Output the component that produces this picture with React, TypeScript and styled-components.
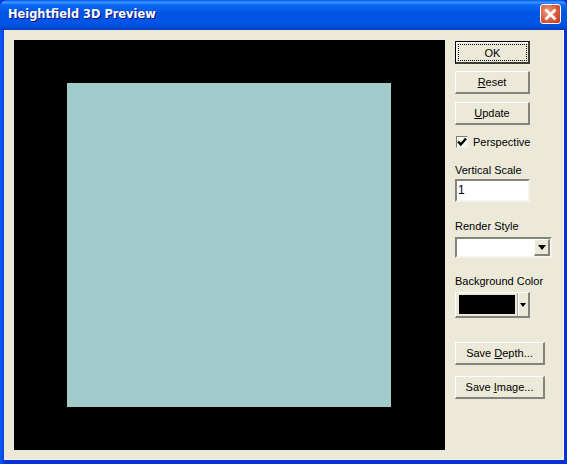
import React from "react";
import styled, { createGlobalStyle, css } from "styled-components";

const GlobalStyle = createGlobalStyle`
    html, body {
        margin: 0;
        padding: 0;
        background: #0831d9;
    }
`;

const Window = styled.div`
    width: 567px;
    height: 464px;
    display: flex;
    flex-direction: column;
    overflow: hidden;
    font-family: "Liberation Sans", Arial, sans-serif;
    font-size: 11px;
    color: #000;
    border-radius: 7px 7px 0 0;
    background: linear-gradient(to right, #0a5cf0 0, #0831d9 6px, #0831d9 100%);
`;

const TitleBar = styled.div`
    height: 30px;
    flex: none;
    display: flex;
    align-items: center;
    justify-content: space-between;
    padding: 0 6px 2px 8px;
    box-sizing: border-box;
    background: linear-gradient(
        to bottom,
        #0058ee 0%,
        #3d95ff 8%,
        #0a6af3 16%,
        #0054e3 45%,
        #0055e8 80%,
        #0048cf 92%,
        #003dc0 100%
    );
`;

const Title = styled.span`
    color: #fff;
    font-family: "DejaVu Sans", Verdana, sans-serif;
    font-weight: bold;
    font-size: 11.4px;
    text-shadow: 1px 1px 0 #0f1089;
`;

const CloseButton = styled.div`
    width: 21px;
    height: 20px;
    box-sizing: border-box;
    border: 1px solid #fff;
    border-radius: 3px;
    background: radial-gradient(circle at 35% 35%, #e8a080 0%, #d8593a 55%, #c13a18 100%);
    display: flex;
    align-items: center;
    justify-content: center;
`;

const Frame = styled.div`
    flex: 1;
    display: flex;
    margin: 0 3px 4px 4px;
    padding: 10px 15px 10px 10px;
    background: #ece9d8;
    box-shadow: inset -1px -1px 0 #f6f4ea;
    gap: 10px;
    min-height: 0;
`;

const Viewport = styled.div`
    width: 431px;
    height: 410px;
    flex: none;
    box-sizing: border-box;
    padding-right: 2px;
    background: #000;
    display: flex;
    align-items: center;
    justify-content: center;
`;

const Surface = styled.div`
    width: 324px;
    height: 324px;
    background: #a2cccc;
`;

const Sidebar = styled.div`
    flex: 1;
    display: flex;
    flex-direction: column;
    align-items: flex-start;
    padding-top: 1px;
`;

const Button = styled.div<{ $wide?: boolean; $default?: boolean; $top: number }>`
    width: ${(p) => (p.$wide ? 90 : 75)}px;
    height: 23px;
    margin-top: ${(p) => p.$top}px;
    box-sizing: border-box;
    flex: none;
    display: flex;
    align-items: center;
    justify-content: center;
    background: #ece9d8;
    border-style: solid;
    border-width: 1px 2px 2px 1px;
    border-color: #fff #85847c #85847c #fff;
    ${(p) =>
        p.$default &&
        css`
            border-width: 1px 2px 2px 1px;
            border-color: #000 #3c3b36 #3c3b36 #000;
            box-shadow: inset 1px 1px 0 #fff;
        `}
`;

const FocusRing = styled.span`
    flex: 1;
    align-self: stretch;
    margin: 2px 1px 1px 2px;
    display: flex;
    align-items: center;
    justify-content: center;
    border: 1px dotted #000;
`;

const Key = styled.u`
    text-underline-offset: 1px;
`;

const CheckRow = styled.div`
    margin-top: 10px;
    height: 13px;
    padding-left: 1px;
    display: flex;
    align-items: center;
    gap: 5px;
`;

const CheckBox = styled.div`
    width: 12px;
    height: 12px;
    box-sizing: border-box;
    border: 1px solid #7f7f78;
    border-right-color: #f4f3ea;
    border-bottom-color: #f4f3ea;
    background: #f5f4ec;
    display: flex;
    align-items: center;
    justify-content: center;
`;

const Label = styled.div<{ $top: number }>`
    margin-top: ${(p) => p.$top}px;
    height: 14px;
    line-height: 14px;
    white-space: nowrap;
`;

const SunkenField = styled.div`
    box-sizing: border-box;
    border-style: solid;
    border-width: 2px;
    border-color: #85847c #f4f3ea #f4f3ea #85847c;
    background: #fff;
`;

const TextField = styled(SunkenField)`
    width: 75px;
    height: 23px;
    margin-top: 2px;
    padding-left: 1px;
    font-size: 12px;
    line-height: 19px;
`;

const ComboField = styled(SunkenField)`
    width: 97px;
    height: 21px;
    margin-top: 4px;
    display: flex;
    justify-content: flex-end;
`;

const ComboArrow = styled.div`
    width: 16px;
    height: 17px;
    box-sizing: border-box;
    background: #ece9d8;
    border-style: solid;
    border-width: 1px 2px 2px 1px;
    border-color: #fff #85847c #85847c #fff;
    display: flex;
    align-items: center;
    justify-content: center;
`;

const ColorButton = styled.div`
    width: 75px;
    height: 26px;
    margin-top: 4px;
    box-sizing: border-box;
    background: #ece9d8;
    border-style: solid;
    border-width: 1px 2px 2px 1px;
    border-color: #fff #85847c #85847c #fff;
    display: flex;
    align-items: center;
    padding-left: 3px;
`;

const Swatch = styled.div`
    width: 56px;
    height: 19px;
    background: #000;
`;

const ColorSplit = styled.div`
    flex: 1;
    height: 100%;
    margin-left: 2px;
    border-left: 1px solid #aca899;
    box-shadow: inset 1px 0 0 #fff;
    display: flex;
    align-items: center;
    justify-content: center;
`;

const CloseGlyph = () => (
    <svg width="13" height="13" viewBox="0 0 13 13">
        <path d="M2.5 2.5 L10.5 10.5 M10.5 2.5 L2.5 10.5" stroke="#fff" strokeWidth="2.8" strokeLinecap="square" />
    </svg>
);

const CheckGlyph = () => (
    <svg width="10" height="10" viewBox="0 0 10 10">
        <path d="M1 4.5 L3.8 7.5 L9 1.5" fill="none" stroke="#000" strokeWidth="2.4" />
    </svg>
);

const DownTriangle = ({ size }: { size: number }) => (
    <svg width={size} height={size / 2 + 1} viewBox={`0 0 ${size} ${size / 2 + 1}`}>
        <path d={`M0 0 H${size} L${size / 2} ${size / 2 + 1} Z`} fill="#000" />
    </svg>
);

const App: React.FC = () => (
    <>
        <GlobalStyle />
        <Window>
            <TitleBar>
                <Title>Heightfield 3D Preview</Title>
                <CloseButton>
                    <CloseGlyph />
                </CloseButton>
            </TitleBar>
            <Frame>
                <Viewport>
                    <Surface />
                </Viewport>
                <Sidebar>
                    <Button $default $top={0}>
                        <FocusRing>OK</FocusRing>
                    </Button>
                    <Button $top={7}>
                        <span>
                            <Key>R</Key>eset
                        </span>
                    </Button>
                    <Button $top={8}>
                        <span>
                            <Key>U</Key>pdate
                        </span>
                    </Button>
                    <CheckRow>
                        <CheckBox>
                            <CheckGlyph />
                        </CheckBox>
                        Perspective
                    </CheckRow>
                    <Label $top={15}>Vertical Scale</Label>
                    <TextField>1</TextField>
                    <Label $top={17}>Render Style</Label>
                    <ComboField>
                        <ComboArrow>
                            <DownTriangle size={8} />
                        </ComboArrow>
                    </ComboField>
                    <Label $top={16}>Background Color</Label>
                    <ColorButton>
                        <Swatch />
                        <ColorSplit>
                            <DownTriangle size={6} />
                        </ColorSplit>
                    </ColorButton>
                    <Button $wide $top={24}>
                        <span>
                            Save <Key>D</Key>epth...
                        </span>
                    </Button>
                    <Button $wide $top={11}>
                        <span>
                            Save <Key>I</Key>mage...
                        </span>
                    </Button>
                </Sidebar>
            </Frame>
        </Window>
    </>
);

export default App;
